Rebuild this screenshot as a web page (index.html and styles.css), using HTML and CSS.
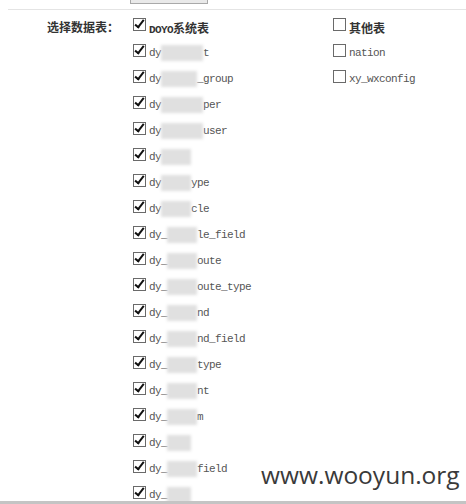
FILE: index.html
```html
<!DOCTYPE html>
<html lang="zh">
<head>
<meta charset="utf-8">
<title>选择数据表</title>
<link rel="stylesheet" href="styles.css">
</head>
<body>
<div class="stub"></div>
<div class="rule"></div>
<div class="form">
  <div class="label">选择数据表：</div>
  <div class="col col1">
    <div class="item"><span class="cb on"></span><span class="head"><span class="mono">DOYO</span>系统表</span></div>
    <div class="item"><span class="cb on"></span><span class="name">dy<i class="blur w7"></i>t</span></div>
    <div class="item"><span class="cb on"></span><span class="name">dy<i class="blur w6"></i>_group</span></div>
    <div class="item"><span class="cb on"></span><span class="name">dy<i class="blur w7"></i>per</span></div>
    <div class="item"><span class="cb on"></span><span class="name">dy<i class="blur w7"></i>user</span></div>
    <div class="item"><span class="cb on"></span><span class="name">dy<i class="blur w5"></i></span></div>
    <div class="item"><span class="cb on"></span><span class="name">dy<i class="blur w5"></i>ype</span></div>
    <div class="item"><span class="cb on"></span><span class="name">dy<i class="blur w5"></i>cle</span></div>
    <div class="item"><span class="cb on"></span><span class="name">dy_<i class="blur w5"></i>le_field</span></div>
    <div class="item"><span class="cb on"></span><span class="name">dy_<i class="blur w5"></i>oute</span></div>
    <div class="item"><span class="cb on"></span><span class="name">dy_<i class="blur w5"></i>oute_type</span></div>
    <div class="item"><span class="cb on"></span><span class="name">dy_<i class="blur w5"></i>nd</span></div>
    <div class="item"><span class="cb on"></span><span class="name">dy_<i class="blur w5"></i>nd_field</span></div>
    <div class="item"><span class="cb on"></span><span class="name">dy_<i class="blur w5"></i>type</span></div>
    <div class="item"><span class="cb on"></span><span class="name">dy_<i class="blur w5"></i>nt</span></div>
    <div class="item"><span class="cb on"></span><span class="name">dy_<i class="blur w5"></i>m</span></div>
    <div class="item"><span class="cb on"></span><span class="name">dy_<i class="blur w4"></i></span></div>
    <div class="item"><span class="cb on"></span><span class="name">dy_<i class="blur w5"></i>field</span></div>
    <div class="item"><span class="cb on"></span><span class="name">dy_<i class="blur w4"></i></span></div>
  </div>
  <div class="col col2">
    <div class="item"><span class="cb"></span><span class="head">其他表</span></div>
    <div class="item"><span class="cb"></span><span class="name">nation</span></div>
    <div class="item"><span class="cb"></span><span class="name">xy_wxconfig</span></div>
  </div>
</div>
<div class="mark">www.wooyun.org</div>
<div class="bar"></div>
</body>
</html>
```
FILE: styles.css
```css
html, body {
  margin: 0;
  padding: 0;
  overflow: hidden;
  background: #fff;
}
body {
  position: relative;
  width: 466px;
  height: 504px;
  font-family: "Noto Sans CJK SC", "Liberation Sans", sans-serif;
  color: #333;
}
.stub {
  margin-left: 130px;
  width: 76px;
  height: 3px;
  border: 1px solid #a9a9a9;
  border-top: none;
  background: #e9e9e9;
}
.rule {
  margin: 5px 0 0 8px;
  height: 1px;
  background: #e4e4e4;
}
.form {
  display: flex;
  padding-top: 2px;
}
.label {
  width: 133px;
  box-sizing: border-box;
  padding-left: 47px;
  margin-top: 8px;
  font-size: 12px;
  line-height: 13px;
  font-weight: bold;
  color: #333;
  flex: none;
}
.col1 {
  width: 200px;
  flex: none;
}
.col2 {
  flex: 1;
}
.item {
  display: flex;
  align-items: flex-start;
  height: 26px;
}
.cb {
  position: relative;
  flex: none;
  width: 11px;
  height: 11px;
  margin-top: 6px;
  border: 1px solid #6a6a6a;
  background: #fff;
}
.cb.on::after {
  content: "";
  position: absolute;
  left: 3px;
  top: -1px;
  width: 3px;
  height: 8px;
  border: solid #111;
  border-width: 0 2.5px 2.5px 0;
  transform: rotate(38deg);
}
.head {
  margin: 9px 0 0 3px;
  font-size: 12px;
  line-height: 13px;
  font-weight: bold;
  color: #333;
  white-space: nowrap;
}
.mono {
  font-family: "Liberation Mono", monospace;
  font-size: 11px;
  letter-spacing: -0.6px;
}
.name {
  margin: 9px 0 0 3px;
  font-family: "Liberation Mono", monospace;
  font-size: 11px;
  letter-spacing: -0.6px;
  line-height: 13px;
  color: #555;
  white-space: nowrap;
}
.blur {
  display: inline-block;
  height: 16px;
  margin: -3px 0;
  vertical-align: middle;
  background: #e0e0e0;
  filter: blur(1.5px);
}
.w4 { width: 24px; }
.w5 { width: 30px; }
.w6 { width: 36px; }
.w7 { width: 42px; }
.mark {
  position: absolute;
  left: 261px;
  top: 460px;
  font-family: "Open Sans", sans-serif;
  font-size: 24.5px;
  line-height: 30px;
  color: #3a3a3a;
}
.bar {
  position: absolute;
  left: 0;
  right: 0;
  bottom: 0;
  height: 3px;
  background: #c4c4c4;
}
```
